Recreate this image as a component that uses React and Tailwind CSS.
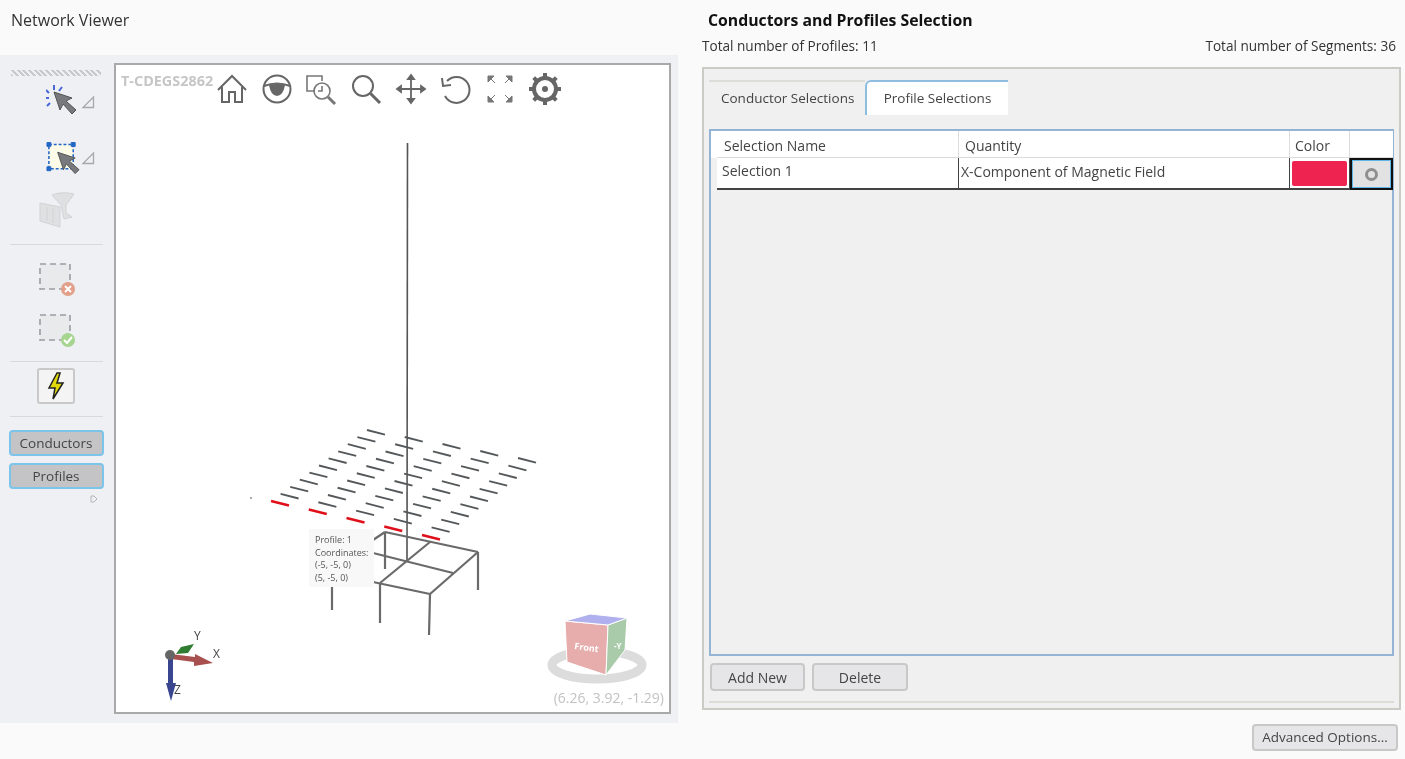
const font = { fontFamily: '"Open Sans", "Noto Sans", sans-serif' }

// grid corners of the profile dashes, viewer page coordinates
const lerp = (a, b, t) => a + (b - a) * t
const dashes = []
for (let c = 0; c < 5; c++) {
  for (let r = 0; r < 11; r++) {
    const u = c / 4
    const v = r / 10
    const x = lerp(lerp(271, 422, u), lerp(367, 518, u), v)
    const y = lerp(lerp(501, 535, u), lerp(430, 458, u), v)
    dashes.push({ key: `${c}-${r}`, x, y, red: r === 0 })
  }
}

const frame = [
  [385, 532, 478, 552],
  [385, 532, 385, 569],
  [373, 540, 385, 532],
  [373, 553, 453, 573],
  [430, 542, 380, 583],
  [478, 552, 430, 594],
  [373, 582, 430, 594],
  [380, 583, 380, 623],
  [430, 594, 429, 635],
  [478, 552, 478, 590],
  [332, 587, 332, 610],
]

function Scene() {
  return (
    <svg className="absolute left-0 top-0" width="1405" height="759" style={{ marginLeft: -116, marginTop: -65 }}>
      <line x1="407.5" y1="143" x2="407" y2="562" stroke="#555" strokeWidth="1.6" />
      {frame.map(([x1, y1, x2, y2], i) => (
        <line key={i} x1={x1} y1={y1} x2={x2} y2={y2} stroke="#6a6a6a" strokeWidth="2.2" />
      ))}
      {dashes.map((d) => (
        <line
          key={d.key}
          x1={d.x}
          y1={d.y}
          x2={d.x + 18}
          y2={d.y + 4.6}
          stroke={d.red ? '#e0101a' : '#55585a'}
          strokeWidth={d.red ? 2.6 : 1.9}
        />
      ))}
      <rect x="250" y="497" width="2" height="2" fill="#aaa" />
    </svg>
  )
}

function Axes() {
  return (
    <svg width="90" height="90" viewBox="0 0 90 90" className="absolute left-[35px] top-[556px]" style={font}>
      <path d="M25 33 L30 26 L43 23 L37 32 Z" fill="#2f7d32" />
      <path d="M20 33 L44 36 L44 33 L62 42 L43 45 L43 41 L20 38 Z" fill="#a8504f" />
      <path d="M17 36 L22 36 L22 62 L25 62 L20 80 L15 62 L17 62 Z" fill="#3a4590" />
      <circle cx="19" cy="34" r="5" fill="#666" />
      <text x="43" y="19" fontSize="12" fill="#444">Y</text>
      <text x="62" y="37" fontSize="12" fill="#444">X</text>
      <text x="23" y="73" fontSize="12" fill="#444">Z</text>
    </svg>
  )
}

function ViewCube() {
  return (
    <svg width="110" height="80" viewBox="0 0 110 80" className="absolute left-[428px] top-[547px]" style={font}>
      <ellipse cx="53" cy="53" rx="45" ry="14" fill="none" stroke="#dcdcdc" strokeWidth="9" />
      <path d="M21 9 L64 13 L62 63 L23 50 Z" fill="#e7adad" stroke="#fff" />
      <path d="M64 13 L83 6 L81 38 L62 63 Z" fill="#a9cba9" stroke="#fff" />
      <path d="M21 9 L46 2 L83 6 L64 13 Z" fill="#b0b0ee" stroke="#fff" />
      <text x="30" y="37" fontSize="9" fontWeight="700" fill="#fff" transform="rotate(8 30 37)">Front</text>
      <text x="70" y="37" fontSize="8" fontWeight="700" fill="#fff">-Y</text>
    </svg>
  )
}

const toolIcon = 'h-[34px] w-[34px] shrink-0'

function ViewerTools() {
  return (
    <div className="flex h-[34px] w-[347px] items-center justify-between">
      <svg viewBox="0 0 34 34" className={toolIcon} fill="none" stroke="#666" strokeWidth="2">
        <path d="M3 18 L17 4 L31 18 M7 15 V30 H14 V20 H20 V30 H27 V15" />
      </svg>
      <svg viewBox="0 0 34 34" className={toolIcon} fill="none" stroke="#666" strokeWidth="2">
        <circle cx="17" cy="17" r="13.5" />
        <path d="M4 14 Q17 9 30 14" />
        <path d="M9 13 Q17 11 25 13 Q23 24 17 24 Q11 24 9 13 Z" fill="#666" stroke="none" />
      </svg>
      <svg viewBox="0 0 34 34" className={toolIcon} fill="none" stroke="#777" strokeWidth="1.6">
        <path d="M11 19 H3 V4 H18 V9" />
        <circle cx="18" cy="19" r="8" />
        <path d="M18 14 V19 H14" />
        <path d="M24 25 L31 32" strokeWidth="3" />
      </svg>
      <svg viewBox="0 0 34 34" className={toolIcon} fill="none" stroke="#666" strokeWidth="2">
        <circle cx="14" cy="14" r="10" />
        <path d="M21.5 21.5 L31 31" strokeWidth="3" />
      </svg>
      <svg viewBox="0 0 34 34" className={toolIcon} fill="none" stroke="#666" strokeWidth="1.8">
        <path d="M17 3 V31 M3 17 H31" />
        <path d="M14 7 L17 3 L20 7 Z M14 27 L17 31 L20 27 Z M7 14 L3 17 L7 20 Z M27 14 L31 17 L27 20 Z" fill="#666" />
      </svg>
      <svg viewBox="0 0 34 34" className={toolIcon} fill="none" stroke="#666" strokeWidth="2">
        <path d="M8 9 A13 13 0 1 1 6 24" />
        <path d="M3 6 L4 14 L12 13" />
      </svg>
      <svg viewBox="0 0 34 34" className={toolIcon} fill="#777" stroke="#777" strokeWidth="1">
        <path d="M5 4 L11 4 L5 10 Z M8 7 L12 11" />
        <path d="M29 4 L23 4 L29 10 Z M26 7 L22 11" />
        <path d="M5 30 L11 30 L5 24 Z M8 27 L12 23" />
        <path d="M29 30 L23 30 L29 24 Z M26 27 L22 23" />
      </svg>
      <svg viewBox="0 0 34 34" className={toolIcon} fill="none" stroke="#666">
        <circle cx="17" cy="17" r="11" strokeWidth="4" />
        <circle cx="17" cy="17" r="3" fill="#666" stroke="none" />
        <path
          d="M17 1 V6 M17 28 V33 M1 17 H6 M28 17 H33 M5.7 5.7 L9 9 M25 25 L28.3 28.3 M5.7 28.3 L9 25 M25 9 L28.3 5.7"
          strokeWidth="4"
        />
      </svg>
    </div>
  )
}

function Corner() {
  return (
    <svg width="14" height="14" viewBox="0 0 14 14" fill="none" stroke="#a8a8a8" strokeWidth="1.3" className="mt-[10px] shrink-0">
      <path d="M12.5 2 V12.5 H2 Z" />
    </svg>
  )
}

function Arrow({ x, y }) {
  return (
    <path
      transform={`translate(${x} ${y})`}
      d="M0 0 L18 6 L12 9 L22 18 L18 22 L9 12 L6 18 Z"
      fill="#77797d"
      stroke="#555"
      strokeWidth="1"
    />
  )
}

function DashBox({ ok }) {
  return (
    <svg width="38" height="38" viewBox="0 0 38 38" fill="none">
      <rect x="1" y="4" width="30" height="25" fill="#e9eaec" stroke="#9b9ca4" strokeWidth="1.6" strokeDasharray="6 4" />
      <circle cx="29" cy="29" r="7" fill={ok ? '#a5d58f' : '#e2a08b'} />
      <path
        d={ok ? 'M25 29 L28 32 L33 26' : 'M26 26 L32 32 M32 26 L26 32'}
        stroke="#fff"
        strokeWidth="2"
      />
    </svg>
  )
}

function Sidebar() {
  return (
    <div className="mr-[2px] flex w-[112px] shrink-0 flex-col items-center pt-[7px]">
      <div className="h-[6px] w-[90px] bg-[repeating-linear-gradient(45deg,#c8c9cc_0_2px,#eef0f3_2px_4px)]" />
      <div className="ml-[29px] mt-[9px] flex h-[36px] w-[49px] justify-between">
        <svg width="34" height="36" viewBox="0 0 34 36">
          <path d="M3 8 L0 5 M8 5 V0 M3 13 H-1 M13 6 L16 2 M4 18 L1 21" stroke="#4a66d8" strokeWidth="2" />
          <Arrow x={8} y={7} />
        </svg>
        <Corner />
      </div>
      <div className="ml-[29px] mt-[20px] flex h-[40px] w-[49px] justify-between">
        <svg width="36" height="38" viewBox="0 0 36 38">
          <rect x="3" y="3" width="25" height="25" fill="#fbfbe8" stroke="#2466c4" strokeWidth="1.6" strokeDasharray="3 2" />
          <path d="M1 1 H5 V5 H1 Z M26 1 H30 V5 H26 Z M1 26 H5 V30 H1 Z" fill="#2466c4" stroke="#2466c4" />
          <Arrow x={12} y={11} />
        </svg>
        <Corner />
      </div>
      <svg width="40" height="38" viewBox="0 0 40 38" className="mt-[10px]" fill="#dfe0e2" stroke="#d2d3d5">
        <path d="M4 12 L24 16 V36 L4 30 Z" />
        <path d="M16 4 Q26 0 38 3 L30 14 V22 L36 26 L28 28 L25 14 Z" />
        <path d="M11 16 V30 M17 17 V32" />
      </svg>
      <div className="mt-[15px] h-px w-[93px] bg-[#d8d9db]" />
      <div className="ml-[4px] mt-[15px] h-[38px]">
        <DashBox />
      </div>
      <div className="ml-[4px] mt-[13px] h-[38px]">
        <DashBox ok />
      </div>
      <div className="mt-[12px] h-px w-[93px] bg-[#d8d9db]" />
      <div className="mt-[6px] flex h-[36px] w-[38px] items-center justify-center rounded-[3px] border-2 border-[#c9c9c9] bg-[#f4f4f4]">
        <svg width="18" height="28" viewBox="0 0 18 28">
          <path d="M10 1 L2 16 H8 L6 27 L16 11 H10 L13 1 Z" fill="#e2d90c" stroke="#222" strokeWidth="1.5" />
        </svg>
      </div>
      <div className="mt-[12px] h-px w-[93px] bg-[#d8d9db]" />
      <button className="mt-[13px] h-[26px] w-[95px] rounded-[4px] border-2 border-[#7cc4ea] bg-[#c4c4c6] text-[13.5px] text-[#444]">
        Conductors
      </button>
      <button className="mt-[7px] h-[26px] w-[95px] rounded-[4px] border-2 border-[#7cc4ea] bg-[#c4c4c6] text-[13.5px] text-[#444]">
        Profiles
      </button>
      <svg width="8" height="8" viewBox="0 0 8 8" className="ml-[76px] mt-[6px]" fill="none" stroke="#b5b5b5">
        <path d="M1 1 H4 L7 4 L4 7 H1 Z" />
      </svg>
    </div>
  )
}

function Viewer() {
  return (
    <div className="relative h-[651px] w-[557px] overflow-hidden border-2 border-[#a9a9a9] bg-white">
      <Scene />
      <div className="relative flex items-start pl-[5px] pt-[5px]">
        <span className="w-[95px] shrink-0 text-[14.4px] font-bold text-[#c6c6c6]">T-CDEGS2862</span>
        <div className="ml-[-1px] mt-[2px]">
          <ViewerTools />
        </div>
      </div>
      <div className="absolute left-[193px] top-[464px] h-[58px] w-[65px] bg-[#f8f8f8] px-[6px] pt-[5px] text-[9px] leading-[12.7px] text-[#555]">
        <div>Profile: 1</div>
        <div>Coordinates:</div>
        <div>(-5, -5, 0)</div>
        <div>(5, -5, 0)</div>
      </div>
      <Axes />
      <ViewCube />
      <span className="absolute bottom-[4px] right-[5px] text-[14px] text-[#c2c2c2]">(6.26, 3.92, -1.29)</span>
    </div>
  )
}

function ProfileTable() {
  return (
    <div className="h-[527px] border-2 border-[#93b4d4] bg-[#f0f0f0] text-[14px] text-[#444]">
      <div className="grid h-[59px] grid-cols-[6px_242px_331px_60px_43px] grid-rows-[27px_32px]">
        <div className="bg-white" />
        <div className="border-r border-b border-[#dcdcdc] bg-white pl-[7px] pt-[4px]">Selection Name</div>
        <div className="border-r border-b border-[#dcdcdc] bg-white pl-[6px] pt-[4px]">Quantity</div>
        <div className="border-r border-b border-[#dcdcdc] bg-white pl-[5px] pt-[4px]">Color</div>
        <div className="border-b border-[#dcdcdc] bg-white" />
        <div />
        <div className="border-r border-b-2 border-[#444] bg-white pl-[5px] pt-[2px]">Selection 1</div>
        <div className="border-r border-b-2 border-[#444] bg-white pl-[2px] pt-[3px]">X-Component of Magnetic Field</div>
        <div className="border-r border-b-2 border-[#444] bg-white px-[2px] pb-[2px] pt-[3px]">
          <div className="h-full rounded-[2px] bg-[#ef2350]" />
        </div>
        <div className="flex items-center justify-center border-2 border-[#111] bg-[#e2e2e2] shadow-[inset_0_0_0_1px_#5db5ea]">
          <span className="h-[13px] w-[13px] rounded-full border-[3px] border-[#8f8f8f]" />
        </div>
      </div>
    </div>
  )
}

export default function App() {
  return (
    <div className="flex h-[759px] w-[1405px] overflow-hidden bg-[#fafafa] blur-[0.6px]" style={font}>
      <div className="w-[702px] shrink-0">
        <div className="h-[55px] pl-[11px] pt-[8px] text-[16px] text-[#333]">Network Viewer</div>
        <div className="flex h-[668px] w-[678px] bg-[#eef0f3] pt-[8px]">
          <Sidebar />
          <Viewer />
        </div>
      </div>
      <div className="flex w-[703px] flex-col">
        <div className="pl-[6px] pt-[9px] text-[15.8px] font-bold text-[#111]">Conductors and Profiles Selection</div>
        <div className="mr-[9px] mt-[3px] flex justify-between text-[13.6px] text-[#333]">
          <span>Total number of Profiles: 11</span>
          <span>Total number of Segments: 36</span>
        </div>
        <div className="mr-[4px] mt-[11px] h-[643px] border-2 border-[#cbcbc5] bg-[#f0f0f0] px-[5px] pt-[11px]">
          <div className="flex h-[35px] text-[13.5px] text-[#444]">
            <div className="flex w-[156px] items-center border-t-2 border-[#dcdcd8] pl-[12px]">Conductor Selections</div>
            <div className="flex w-[143px] items-center justify-center rounded-tl-[6px] border-l-2 border-t-2 border-[#8fbde0] bg-white">
              Profile Selections
            </div>
          </div>
          <div className="mt-[14px]">
            <ProfileTable />
          </div>
          <div className="mt-[7px] flex gap-[7px] pl-[1px]">
            <button className="h-[28px] w-[95px] rounded-[4px] border-2 border-[#c8c8c8] bg-[#e6e6e8] text-[14px] text-[#444]">
              Add New
            </button>
            <button className="h-[28px] w-[96px] rounded-[4px] border-2 border-[#c8c8c8] bg-[#e6e6e8] text-[14px] text-[#444]">
              Delete
            </button>
          </div>
          <div className="mt-[10px] h-[2px] bg-[#dcdcd8]" />
        </div>
        <div className="mr-[7px] mt-[14px] flex justify-end">
          <button className="h-[27px] w-[146px] rounded-[4px] border-2 border-[#c8c8c8] bg-[#e6e6e8] text-[13.5px] text-[#444]">
            Advanced Options...
          </button>
        </div>
      </div>
    </div>
  )
}
